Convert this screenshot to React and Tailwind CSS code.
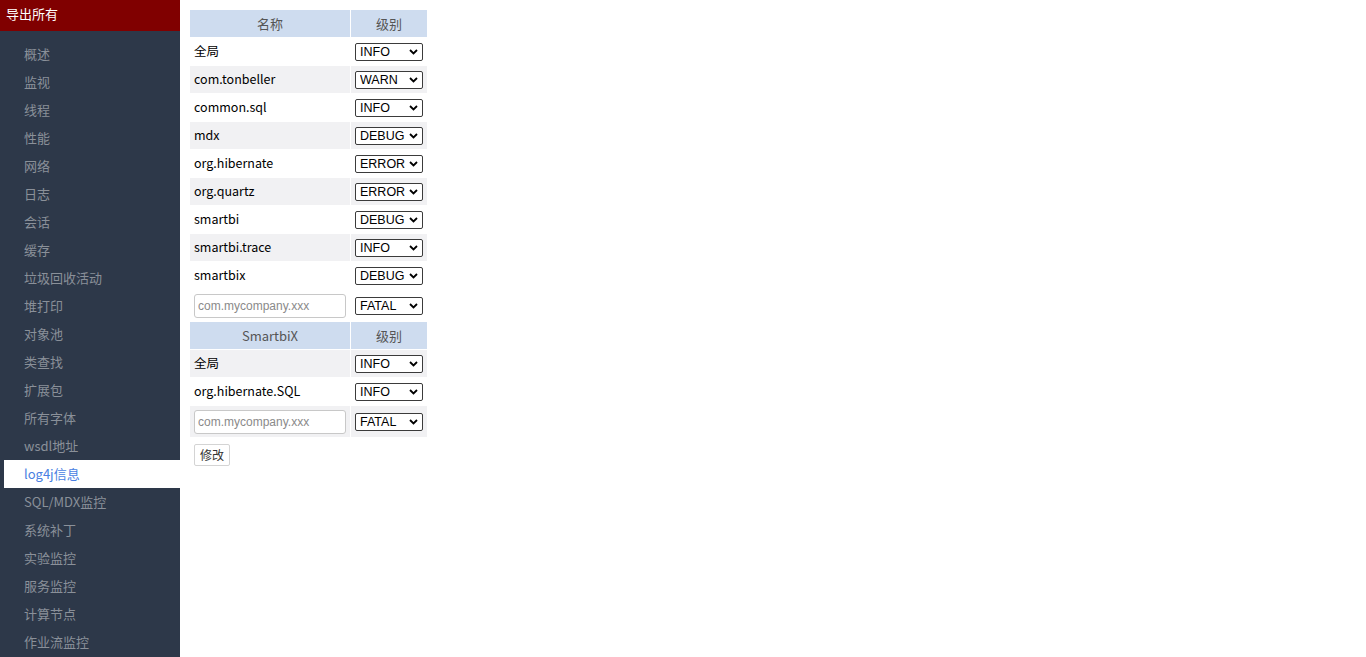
import React from 'react';

const MENU = [
  '概述', '监视', '线程', '性能', '网络', '日志', '会话', '缓存', '垃圾回收活动', '堆打印',
  '对象池', '类查找', '扩展包', '所有字体', 'wsdl地址', 'log4j信息', 'SQL/MDX监控', '系统补丁',
  '实验监控', '服务监控', '计算节点', '作业流监控',
];

const MAIN_ROWS = [
  { name: '全局', level: 'INFO', gray: false },
  { name: 'com.tonbeller', level: 'WARN', gray: true },
  { name: 'common.sql', level: 'INFO', gray: false },
  { name: 'mdx', level: 'DEBUG', gray: true },
  { name: 'org.hibernate', level: 'ERROR', gray: false },
  { name: 'org.quartz', level: 'ERROR', gray: true },
  { name: 'smartbi', level: 'DEBUG', gray: false },
  { name: 'smartbi.trace', level: 'INFO', gray: true },
  { name: 'smartbix', level: 'DEBUG', gray: false },
];

const X_ROWS = [
  { name: '全局', level: 'INFO', gray: true },
  { name: 'org.hibernate.SQL', level: 'INFO', gray: false },
];

const LEVELS = ['DEBUG', 'INFO', 'WARN', 'ERROR', 'FATAL'];

function LevelSelect({ value }) {
  return (
    <div className="relative w-[68px] h-[18px]">
      <select
        defaultValue={value}
        className="block appearance-none w-full h-full border border-[#3b3b3b] rounded-[2px] bg-white pl-[4px] text-[12.5px] leading-[16px] text-black font-['Liberation_Sans',Arial,sans-serif] outline-none"
      >
        {LEVELS.map(l => (
          <option key={l} value={l}>{l}</option>
        ))}
      </select>
      <svg className="absolute right-[5px] top-[6px] pointer-events-none" width="9" height="6" viewBox="0 0 9 6">
        <path d="M1 1 L4.5 4.5 L8 1" fill="none" stroke="#000" strokeWidth="1.8" />
      </svg>
    </div>
  );
}

function HeaderRow({ title }) {
  return (
    <tr>
      <th className="h-[27px] w-[160px] bg-[#cedcef] text-[13px] font-normal text-[#555] text-center">{title}</th>
      <th className="h-[27px] w-[76px] bg-[#cedcef] text-[13px] font-normal text-[#555] text-center">级别</th>
    </tr>
  );
}

function LevelRow({ row }) {
  const bg = row.gray ? 'bg-[#f1f1f3]' : 'bg-white';
  return (
    <tr>
      <td className={`h-[27px] px-[4px] text-[12.5px] text-black ${bg}`}>{row.name}</td>
      <td className={`h-[27px] px-[4px] ${bg}`}>
        <LevelSelect value={row.level} />
      </td>
    </tr>
  );
}

function InputRow({ gray }) {
  const bg = gray ? 'bg-[#f1f1f3]' : 'bg-white';
  return (
    <tr>
      <td className={`h-[31px] px-[4px] ${bg}`}>
        <input
          placeholder="com.mycompany.xxx"
          className="block w-[152px] h-[24px] border border-[#c8c8c8] rounded-[3px] bg-white px-[3px] text-[12px] text-black placeholder:text-[#8a8a8a] font-['Liberation_Sans',Arial,sans-serif] outline-none"
        />
      </td>
      <td className={`h-[31px] px-[4px] ${bg}`}>
        <LevelSelect value="FATAL" />
      </td>
    </tr>
  );
}

export default function App() {
  return (
    <div className="flex min-h-[657px] bg-white font-['Noto_Sans_CJK_SC','Noto_Sans',sans-serif]">
      <aside className="w-[180px] shrink-0 bg-[#2d3849]">
        <div className="h-[31px] bg-[#800000] px-[6px] text-[13px] leading-[28px] text-white">导出所有</div>
        <ul className="pt-[9px]">
          {MENU.map(item => (
            <li
              key={item}
              className={
                item === 'log4j信息'
                  ? 'ml-[4px] h-[28px] bg-white pl-[20px] text-[13px] leading-[28px] text-[#4a7fe2]'
                  : 'h-[28px] pl-[24px] text-[13px] leading-[28px] text-[#8a9099]'
              }
            >
              {item}
            </li>
          ))}
        </ul>
      </aside>

      <main className="pl-[9px] pt-[9px]">
        <table className="border-separate border-spacing-[1px]">
          <tbody>
            <HeaderRow title="名称" />
            {MAIN_ROWS.map(r => (
              <LevelRow key={r.name} row={r} />
            ))}
            <InputRow gray={false} />
            <HeaderRow title="SmartbiX" />
            {X_ROWS.map(r => (
              <LevelRow key={r.name} row={r} />
            ))}
            <InputRow gray={true} />
          </tbody>
        </table>
        <button className="ml-[5px] mt-[6px] h-[22px] px-[5px] border border-[#d4d4d4] rounded-[2px] bg-white text-[12px] text-[#333]">
          修改
        </button>
      </main>
    </div>
  );
}
